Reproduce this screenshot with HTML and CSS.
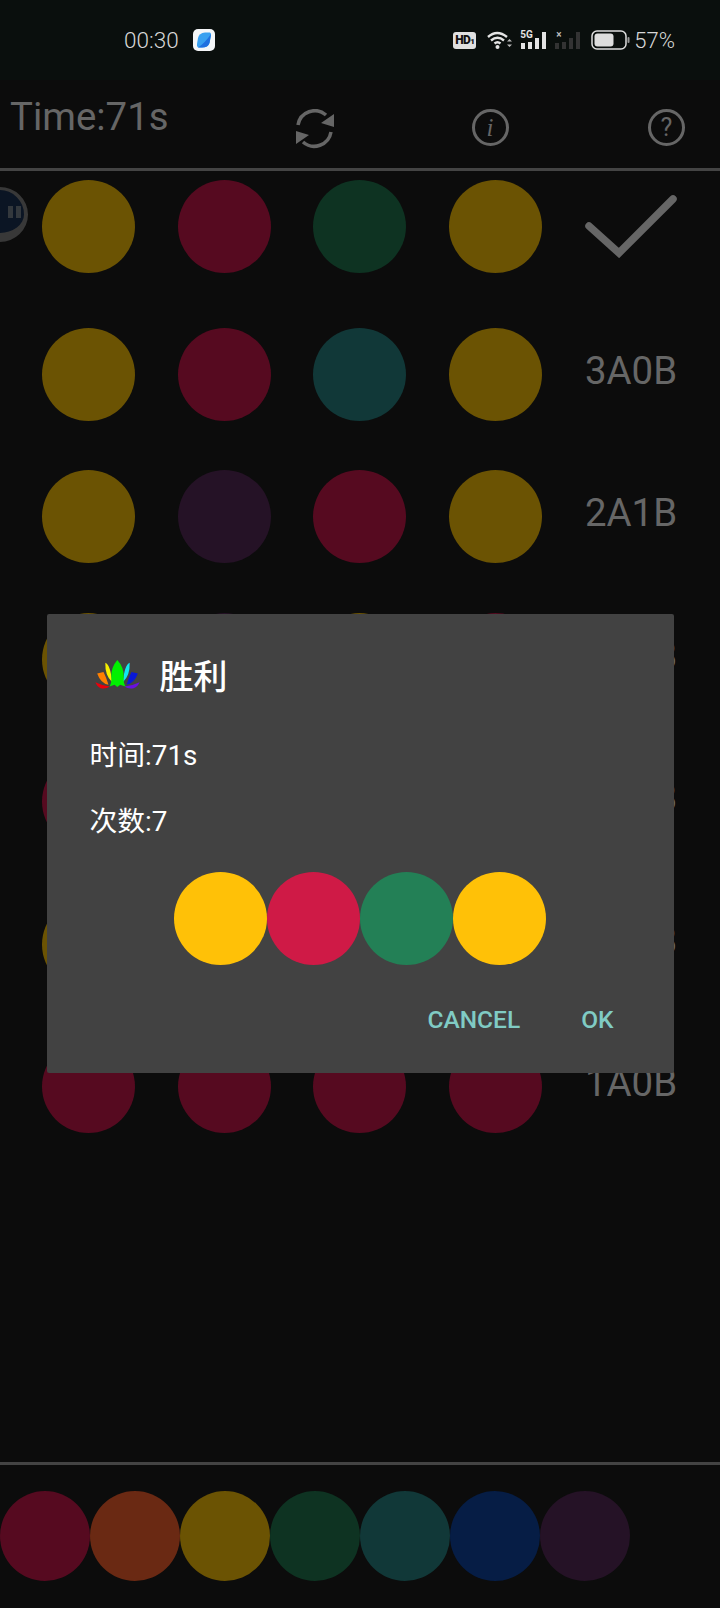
FILE: index.html
```html
<!DOCTYPE html>
<html>
	<head>
		<title>Mastermind</title>
		<meta charset="utf-8" />
		<link rel="stylesheet" href="styles.css">
	</head>
<body>
	<div id="screen">
		<div class="statusbar">
			<span class="clock">00:30</span>
			<span class="appicon">
				<svg width="22" height="22" viewBox="0 0 22 22"><rect width="22" height="22" rx="5" fill="#f4f6f8"/><path d="M5 9 Q6 4 12 3.500 L17 3.500 Q18.500 4 18 7 L16.500 14 Q15 18.500 9 18.500 L5 18.500 Q3.500 18 4 15 Z" fill="#38a0f0"/><path d="M5 18.500 Q12 14 18 5 L16.500 14 Q15 18.500 9 18.500 Z" fill="#1f70e0"/></svg>
			</span>
			<span class="status-right">
				<span class="hd">HD<small>1</small></span>
				<svg class="wifi" width="25" height="18" viewBox="0 0 25 18" fill="none" stroke="#e4e4e4" stroke-width="2.400">
					<path d="M1 6 Q10 -2 20 6"/><path d="M4 9.500 Q10.500 4 17 9.500"/><path d="M7.500 12.500 Q10.500 10 13.500 12.500"/>
					<circle cx="10.500" cy="16" r="2" fill="#e4e4e4" stroke="none"/>
					<path d="M20 10.500 L22.500 8 L25 10.500 Z M20 13.500 L22.500 16 L25 13.500 Z" fill="#bbb" stroke="none"/>
				</svg>
				<span class="signal">
					<span class="netlabel">5G</span>
					<svg width="28" height="18" viewBox="0 0 28 18" fill="#e4e4e4"><rect x="1" y="12" width="4" height="6"/><rect x="8" y="11" width="4" height="7"/><rect x="15" y="7" width="4" height="11"/><rect x="22" y="1" width="4" height="17"/></svg>
				</span>
				<span class="signal off">
					<span class="netlabel">×</span>
					<svg width="26" height="18" viewBox="0 0 26 18" fill="#333"><rect x="0" y="12" width="4" height="6"/><rect x="7" y="11" width="4" height="7"/><rect x="14" y="7" width="4" height="11"/><rect x="21" y="1" width="4" height="17"/></svg>
				</span>
				<svg class="batt" width="39" height="20" viewBox="0 0 39 20"><rect x="1" y="1" width="34" height="18" rx="5" fill="none" stroke="#ddd" stroke-width="1.500"/><rect x="3.500" y="3.500" width="19" height="13" rx="3" fill="#ddd"/><rect x="36.500" y="7" width="2" height="6" rx="1" fill="#999"/></svg>
				<span class="pct">57%</span>
			</span>
		</div>

		<div class="toolbar">
			<span class="time">Time:71s</span>
			<svg class="tool first" width="40" height="40" viewBox="0 0 40 40" fill="none" stroke="#666" stroke-width="3.500">
				<path d="M3 16 A17 17 0 0 1 31 6"/><path d="M36 23 A17 17 0 0 1 8 33"/>
				<path d="M39 5 V18 L26 14 Z M1 22 V35 L14 26 Z" fill="#666" stroke="none"/>
			</svg>
			<span class="tool round info">i</span>
			<span class="tool round">?</span>
		</div>
		<div class="rule"></div>

		<div class="board">
			<div class="row first-row">
				<span class="dot yellow"></span><span class="dot red"></span><span class="dot green"></span><span class="dot yellow"></span>
				<svg class="check" width="92" height="64" viewBox="0 0 92 64" fill="none" stroke="#666" stroke-width="7.500" stroke-linecap="round"><path d="M4 32 L34 59 L88 5"/></svg>
			</div>
			<div class="row">
				<span class="dot yellow"></span><span class="dot red"></span><span class="dot teal"></span><span class="dot yellow"></span>
				<span class="score">3A0B</span>
			</div>
			<div class="row">
				<span class="dot yellow"></span><span class="dot purple"></span><span class="dot red"></span><span class="dot yellow"></span>
				<span class="score">2A1B</span>
			</div>
			<div class="row">
				<span class="dot yellow"></span><span class="dot purple"></span><span class="dot yellow"></span><span class="dot red"></span>
				<span class="score">2A0B</span>
			</div>
			<div class="row">
				<span class="dot red"></span><span class="dot red"></span><span class="dot red"></span><span class="dot red"></span>
				<span class="score">1A0B</span>
			</div>
			<div class="row">
				<span class="dot yellow"></span><span class="dot yellow"></span><span class="dot yellow"></span><span class="dot yellow"></span>
				<span class="score">2A0B</span>
			</div>
			<div class="row">
				<span class="dot red"></span><span class="dot red"></span><span class="dot red"></span><span class="dot red"></span>
				<span class="score">1A0B</span>
			</div>
		</div>

		<div class="rule"></div>
		<div class="palette">
			<span class="swatch red"></span><span class="swatch orange"></span><span class="swatch yellow"></span><span class="swatch green"></span><span class="swatch teal"></span><span class="swatch navy"></span><span class="swatch purple"></span>
		</div>

		<div class="floatball"><span></span><span></span></div>

		<div class="dialog">
			<div class="dlg-title">
				<svg width="45" height="29" viewBox="15 30 125 82">
					<path d="M15 93 Q35 103 56 105 Q45 113 30 110 Q20 106 15 93 Z" fill="#e8000c"/>
					<path d="M140 93 Q120 103 97 105 Q108 113 123 110 Q135 106 140 93 Z" fill="#6a10e0"/>
					<path d="M20 68 L38 64 Q46 80 52 100 Q30 96 20 68 Z" fill="#ff8000"/>
					<path d="M135 68 L117 64 Q109 80 103 100 Q125 96 135 68 Z" fill="#0818d8"/>
					<path d="M43 38 Q58 45 62 92 Q42 75 43 38 Z" fill="#f6f000"/>
					<path d="M112 38 Q97 45 93 92 Q113 75 112 38 Z" fill="#10e8f0"/>
					<path d="M77 30 Q95 50 95 75 Q93 92 100 105 L85 100 L77 106 L69 100 L55 105 Q62 92 60 75 Q60 50 77 30 Z" fill="#00f000"/>
				</svg>
				<span class="dlg-heading">胜利</span>
			</div>
			<div class="dlg-line">时间:71s</div>
			<div class="dlg-line">次数:7</div>
			<div class="answer">
				<span class="dot a-yellow"></span><span class="dot a-red"></span><span class="dot a-green"></span><span class="dot a-yellow"></span>
			</div>
			<div class="dlg-buttons">
				<span>CANCEL</span>
				<span>OK</span>
			</div>
		</div>
	</div>
</body>
</html>
```

FILE: styles.css
```css
* {
	box-sizing: border-box;
}
body {
	margin: 0;
	background-color: #0c0c0c;
	font-family: Roboto, "Noto Sans CJK SC", sans-serif;
}
#screen {
	position: relative;
	width: 720px;
	height: 1608px;
	overflow: hidden;
	background-color: #0c0c0c;
}

/* status bar */
.statusbar {
	display: flex;
	align-items: center;
	height: 80px;
	padding: 0 45px 0 124px;
	background-color: #0a0f0d;
	color: #d8d8d8;
}
.clock {
	font-size: 22.500px;
	font-weight: 300;
}
.appicon {
	display: flex;
	margin-left: 14px;
}
.status-right {
	display: flex;
	align-items: center;
	margin-left: auto;
}
.hd {
	width: 23px;
	height: 17px;
	background-color: #e0e0e0;
	border-radius: 3px;
	color: #111;
	font-size: 12px;
	font-weight: 900;
	line-height: 17px;
	text-align: center;
	letter-spacing: -0.5px;
	white-space: nowrap;
}
.hd small {
	font-size: 8px;
}
.wifi {
	margin-left: 11px;
}
.signal {
	position: relative;
	display: flex;
	margin-left: 8px;
}
.netlabel {
	position: absolute;
	left: 0;
	top: -1px;
	color: #e4e4e4;
	font-size: 10px;
	font-weight: 700;
	line-height: 10px;
}
.signal.off {
	margin-left: 7px;
}
.signal.off .netlabel {
	color: #bbb;
	left: 1px;
}
.batt {
	margin-left: 10px;
}
.pct {
	margin-left: 4px;
	font-size: 22px;
	font-weight: 300;
}

/* toolbar */
.toolbar {
	display: flex;
	height: 88px;
	padding-left: 10px;
}
.time {
	margin-top: 15px;
	color: #666;
	font-size: 38.400px;
	line-height: 44px;
}
.tool {
	margin-top: 29px;
	margin-left: 139.500px;
}
.tool.first {
	margin-left: 126px;
}
.round {
	width: 37px;
	height: 37px;
	border: 3px solid #666;
	border-radius: 50%;
	color: #666;
	font-size: 25px;
	line-height: 31px;
	text-align: center;
}
.info {
	margin-left: 137px;
	font-family: "Liberation Serif", serif;
	font-style: italic;
}
.rule {
	height: 3px;
	background-color: #444;
}

/* board */
.board {
	height: 1291px;
	padding-top: 9px;
}
.row {
	display: flex;
	height: 142.500px;
	padding-left: 42px;
	gap: 42.500px;
}
.first-row {
	height: 147.500px;
}
.dot {
	flex: none;
	width: 93px;
	height: 93px;
	border-radius: 50%;
}
.check {
	margin: 14px 0 0 1px;
}
.score {
	margin: 21px 0 0 1px;
	color: #666;
	font-size: 38.400px;
	line-height: 44px;
}
.red { background-color: #560a20; }
.orange { background-color: #6a2913; }
.yellow { background-color: #6b5303; }
.green { background-color: #0e3322; }
.teal { background-color: #113838; }
.navy { background-color: #061d45; }
.purple { background-color: #251226; }

/* colour picker */
.palette {
	display: flex;
	padding-top: 26px;
}
.swatch {
	width: 90px;
	height: 90px;
	border-radius: 50%;
}

/* floating ball on the left edge */
.floatball {
	position: absolute;
	left: -29px;
	top: 187px;
	display: flex;
	align-items: center;
	justify-content: flex-end;
	gap: 3px;
	width: 57px;
	height: 55px;
	padding-right: 3px;
	border-style: solid;
	border-color: #383838;
	border-width: 3px 4px 9px 6px;
	border-radius: 50%;
	background-color: #0b1524;
}
.floatball span {
	width: 5px;
	height: 12px;
	background-color: #33383d;
}

/* dialog */
.dialog {
	position: absolute;
	left: 46.500px;
	top: 614px;
	width: 627px;
	height: 459px;
	padding-top: 40px;
	background-color: #424242;
	border-radius: 2px;
	color: #fff;
}
.dlg-title {
	display: flex;
	align-items: center;
	height: 40px;
	padding-left: 48px;
}
.dlg-heading {
	margin-left: 20px;
	font-size: 34px;
	font-weight: 500;
}
.dlg-line {
	padding-left: 43px;
	font-size: 27.800px;
	line-height: 40px;
}
.dlg-title + .dlg-line {
	margin-top: 42px;
}
.dlg-line + .dlg-line {
	margin-top: 26px;
}
.answer {
	display: flex;
	justify-content: center;
	margin-top: 29.500px;
}
.a-yellow { background-color: #ffc107; }
.a-red { background-color: #cf1a46; }
.a-green { background-color: #238056; }
.dlg-buttons {
	display: flex;
	justify-content: flex-end;
	gap: 61px;
	margin-top: 35px;
	padding-right: 60px;
	color: #80cbc4;
	font-size: 24.500px;
	font-weight: 500;
	line-height: 40px;
}
```
